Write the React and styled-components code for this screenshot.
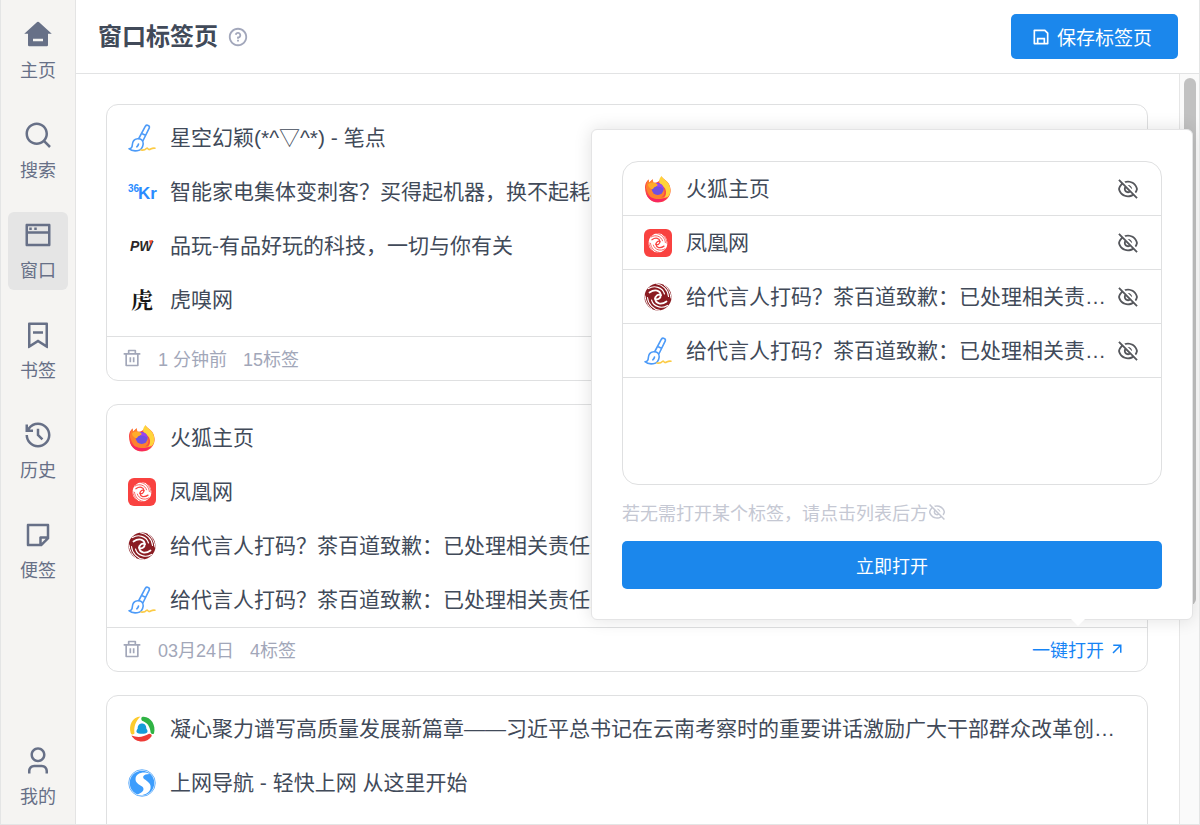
import { useState } from 'react';
import styled, { createGlobalStyle } from 'styled-components';
import {
  RiArrowRightUpLine,
  RiBookmark2Line,
  RiDeleteBinLine,
  RiEyeOffLine,
  RiHistoryLine,
  RiQuestionLine,
  RiSaveLine,
  RiSearchLine,
  RiStickyNoteLine,
  RiUser3Line,
  RiWindowLine,
} from 'react-icons/ri';

const navItems = [
  { id: 'home', label: '主页', Icon: HomeIcon },
  { id: 'search', label: '搜索', Icon: RiSearchLine },
  { id: 'window', label: '窗口', Icon: RiWindowLine },
  { id: 'bookmark', label: '书签', Icon: RiBookmark2Line },
  { id: 'history', label: '历史', Icon: RiHistoryLine },
  { id: 'note', label: '便签', Icon: RiStickyNoteLine },
];

const savedTabs = [
  { id: 1, icon: 'firefox', title: '火狐主页' },
  { id: 2, icon: 'ifeng', title: '凤凰网' },
  { id: 3, icon: 'phoenix', title: '给代言人打码？茶百道致歉：已处理相关责任人' },
  { id: 4, icon: 'brush', title: '给代言人打码？茶百道致歉：已处理相关责任人' },
];

const groups = [
  {
    id: 'recent',
    time: '1 分钟前',
    count: 15,
    tabs: [
      { id: 1, icon: 'brush', title: '星空幻颖(*^▽^*) - 笔点' },
      { id: 2, icon: 'kr', title: '智能家电集体变刺客？买得起机器，换不起耗材' },
      { id: 3, icon: 'pw', title: '品玩-有品好玩的科技，一切与你有关' },
      { id: 4, icon: 'tiger', title: '虎嗅网' },
    ],
  },
  { id: 'march', time: '03月24日', count: 4, tabs: savedTabs },
  {
    id: 'older',
    time: '03月23日',
    count: 2,
    tabs: [
      {
        id: 1,
        icon: 'tencent',
        title: '凝心聚力谱写高质量发展新篇章——习近平总书记在云南考察时的重要讲话激励广大干部群众改革创新热情',
      },
      { id: 2, icon: 'sogou', title: '上网导航 - 轻快上网 从这里开始' },
    ],
  },
];

export default function App() {
  const [active, setActive] = useState('window');
  const [opened, setOpened] = useState('march');

  return (
    <Shell>
      <GlobalStyle />
      <Sidebar>
        <Nav>
          {navItems.map(({ id, label, Icon }) => (
            <NavButton key={id} type="button" $active={active === id} onClick={() => setActive(id)}>
              <Icon size={30} aria-hidden="true" />
              {label}
            </NavButton>
          ))}
        </Nav>
        <NavButton type="button" $active={active === 'me'} onClick={() => setActive('me')}>
          <RiUser3Line size={30} aria-hidden="true" />
          我的
        </NavButton>
      </Sidebar>
      <Main>
        <Header>
          <h1>窗口标签页</h1>
          <HelpButton type="button" aria-label="帮助">
            <RiQuestionLine size={22} />
          </HelpButton>
          <SaveButton type="button">
            <RiSaveLine size={20} aria-hidden="true" />
            保存标签页
          </SaveButton>
        </Header>
        <Body>
          <Cards>
            {groups.map(group => (
              <Card key={group.id} onMouseEnter={() => setOpened(group.id)}>
                <TabList $more={group.count > group.tabs.length}>
                  {group.tabs.map(tab => (
                    <li key={tab.id}>
                      <TabLink href="#">
                        <Favicon name={tab.icon} />
                        <TabTitle>{tab.title}</TabTitle>
                      </TabLink>
                    </li>
                  ))}
                </TabList>
                <CardFooter>
                  <IconButton type="button" aria-label="删除">
                    <RiDeleteBinLine size={20} />
                  </IconButton>
                  <time>{group.time}</time>
                  <span>{group.count}标签</span>
                  {opened === group.id && (
                    <OpenLink href="#">
                      一键打开
                      <RiArrowRightUpLine size={18} aria-hidden="true" />
                    </OpenLink>
                  )}
                </CardFooter>
              </Card>
            ))}
          </Cards>
          <Track>
            <Thumb />
          </Track>
        </Body>
      </Main>
      <OpenPopover tabs={savedTabs} />
    </Shell>
  );
}

function OpenPopover({ tabs }) {
  return (
    <Popover role="dialog" aria-label="一键打开">
      <PickList>
        {tabs.map(tab => (
          <PickRow key={tab.id}>
            <Favicon name={tab.icon} />
            <TabTitle>{tab.title}</TabTitle>
            <EyeButton type="button" aria-label="隐藏">
              <RiEyeOffLine size={22} />
            </EyeButton>
          </PickRow>
        ))}
      </PickList>
      <Hint>
        若无需打开某个标签，请点击列表后方
        <RiEyeOffLine size={18} aria-hidden="true" />
      </Hint>
      <OpenButton type="button">立即打开</OpenButton>
    </Popover>
  );
}

function HomeIcon({ size }) {
  return (
    <svg width={size} height={size} viewBox="0 0 24 24" fill="currentColor" aria-hidden="true">
      <path d="M20 20a1 1 0 0 1-1 1H5a1 1 0 0 1-1-1v-9H1l10.327-9.388a1 1 0 0 1 1.346 0L23 11h-3v9zM8 15v2h8v-2H8z" />
    </svg>
  );
}

// a disc cut by spiral arms, the second half is the first one turned round
function Swirl({ color, gap }) {
  return (
    <g>
      <circle cx="14" cy="14" r="13.5" fill={color} />
      <g fill="none" stroke={gap} strokeLinecap="round">
        {[0, 180].map(angle => (
          <g key={angle} transform={`rotate(${angle} 14 14)`}>
            <path d="M17 12.300C14.500 10.500 11 12.500 11.300 16.300c.3 4.200 5.700 6.200 11.200 2.200" strokeWidth="1.800" />
            <path d="M7.500 17C9.500 24 18 26 23.500 22.500" strokeWidth="1.200" />
            <path d="M3.500 14.500C4 21 9.500 26.500 15.500 27.300" strokeWidth="1.100" />
            <path d="M1 13c.5 5.500 3 10 7 13.200" strokeWidth="1" />
          </g>
        ))}
      </g>
    </g>
  );
}

const favicons = {
  brush: (
    <g fill="none" strokeLinecap="round" strokeLinejoin="round" strokeWidth="1.600">
      <path stroke="#4d9bf8" d="M10.800 14.500 17.400 2.200c1.300-2 4.600-.7 3.900 1.700l-6.200 12.600M14.300 9.800l3.100 1.500" />
      <path
        stroke="#4d9bf8"
        d="M9.300 14.800c3.600-.6 6.300 1.800 5.900 5.200-.4 3.500-2.600 6.300-6 6.700-3 .4-6.300-.2-8.200-2 2.300 0 3.200-1.200 3.300-3.700.2-3.300 2-5.800 5-6.200zM10.500 20c-.2 1.200-.8 2-1.700 2.800"
      />
      <path stroke="#fccb45" d="M13 26c2.500.5 4.200-.2 5.700-1.800.8-.8 1.500 1.700 2.600 1.400 1.600-.5 2.800-1.900 5.700-1.400" />
    </g>
  ),
  kr: (
    <g fill="#2a8cff" fontFamily="'Liberation Sans', sans-serif" fontWeight="700">
      <text x="0" y="14" fontSize="10">
        36
      </text>
      <text x="10" y="21" fontSize="17">
        Kr
      </text>
    </g>
  ),
  pw: (
    <g>
      <text x="2" y="19" fontSize="14" fill="#2b2728" fontFamily="'Liberation Sans', sans-serif" fontStyle="italic" fontWeight="700">
        PW
      </text>
      <path fill="#f05032" d="m21 8.500 4-.5-2.500 6z" />
    </g>
  ),
  tiger: (
    <text x="3" y="22" fontSize="22" fill="#171717" fontFamily="'Noto Serif CJK SC', 'Noto Sans CJK SC', serif" fontWeight="700">
      虎
    </text>
  ),
  firefox: (
    <g>
      <path fill="#fb4a45" d="M1 12.500C1.200 8 3 6 4.600 4.600l.6 3 3.400-3.300.8 3.500c3 .4 6.600-1 8.200-6.300 1.200 2.500 4.400 3.200 6.700 6.500 2 3 3.300 8 1.400 12-2.200 4.800-6.500 7.500-11.700 7.500C7 27.500 1 22 1 12.500z" />
      <path fill="#ff9425" d="M2 13c0-4 1-6.500 2.600-8.400l.6 3 3.400-3.300.8 3.500c5-.2 9 2 10.600 6 1 4 .5 7-3.200 9 5-1 9-4.500 9.400-9 .6 8.200-6 12.500-12 12C8 25.500 4 20 2 13z" opacity=".75" />
      <path fill="#ffd43a" d="M17.600 1c.6 3 5.400 4 7.600 8.800 1.700 4 1.500 7.700.2 10.200-1.400 2.300-3.400 3.600-5.600 4 2.200-3 3-7 1.400-10.200-1.500-3.200-4.800-3.800-6-6.400-.4-2.400.8-5 2.400-6.400z" />
      <circle cx="13.700" cy="14" r="6" fill="#7150e0" />
      <path fill="#9b43f0" d="M11 8.700c4.400-1.700 8.700 1.500 8.700 6-1.600-3-4.300-3.300-6.200-2.700z" />
      <path fill="#ffac29" d="M4 9.500c2-2.500 7-3 9.800.4-1 1.900-3.600 1.500-4.300 3.300-.7 1.600-2.400 1-3 .2C5 12.500 4 11 4 9.500z" />
      <path fill="#f72662" d="M2 18c3.500 5.700 14 8.500 21.500 3.500-4.500 8-17.500 8-21.500-3.500z" />
    </g>
  ),
  ifeng: (
    <g>
      <rect width="28" height="28" rx="6" fill="#f94240" />
      <g transform="translate(4 4) scale(.71)">
        <Swirl color="#fff" gap="#f94240" />
      </g>
    </g>
  ),
  phoenix: <Swirl color="#8a1c22" gap="#fff" />,
  tencent: (
    <g>
      <path fill="#fdcb2d" d="M12.500 1.500C4 2 .5 11 2.700 18c.9 2 2.300 2 3.800.6C5.500 12 7.500 6 12.500 1.500z" />
      <path fill="#2fb344" d="M14 2c8-1.500 14.500 8 12 16.500-1.500 1-2.500.4-3.300-.8C22 11 19 7.500 14 5.800c-1-1.200-1-2.800 0-3.800z" />
      <path fill="#ee3b36" d="M3.500 20.500c6 2.500 12 1.600 17.600-1.700 2 .3 3 1 2.500 2.400-4.500 7.300-16.100 7-20.100-.7z" />
      <path fill="#159bd9" d="M14 8.500c3 0 4.300 2.200 4.300 5 1.200 1.500 1.700 3.300.8 4-.8 1.700-9.400 1.700-10.200 0-.9-.7-.4-2.500.8-4 0-2.800 1.300-5 4.300-5z" />
    </g>
  ),
  sogou: (
    <g>
      <circle cx="14" cy="14" r="13.300" fill="#fff" stroke="#6cb3fb" strokeWidth="1" />
      <circle cx="14" cy="14" r="12.300" fill="#3c9dfd" />
      <path
        fill="#fff"
        d="M21.500 5C16 1.700 8.500 4 7.600 9c-.7 5 3.500 6.300 6.500 8.600 2.600 2 1.500 5.400-2.500 6.900-1 .5-2 .9-3 1 6.500 1.800 12.700-1 13.900-6 1-5-2.800-7-6-9.300-2.600-2-1.500-5 5-5.200z"
      />
    </g>
  ),
};

function Favicon({ name }) {
  return (
    <FaviconSvg viewBox="0 0 28 28" aria-hidden="true">
      {favicons[name]}
    </FaviconSvg>
  );
}

const GlobalStyle = createGlobalStyle`
  * {
    box-sizing: border-box;
  }

  body {
    margin: 0;
    background: #fff;
    color: #414a59;
    font-family: 'Liberation Sans', 'Noto Sans CJK SC', sans-serif;
  }

  button {
    border: none;
    padding: 0;
    background: none;
    color: inherit;
    font: inherit;
    cursor: pointer;
  }

  a {
    color: inherit;
    text-decoration: none;
  }

  ul {
    list-style: none;
    margin: 0;
    padding: 0;
  }

  svg {
    flex-shrink: 0;
  }
`;

const Shell = styled.div`
  position: relative;
  display: flex;
  height: 100vh;
  border: 1px solid #e4e5e5;
  border-top: none;
  overflow: hidden;
`;

const Sidebar = styled.aside`
  flex: 0 0 75px;
  display: flex;
  flex-direction: column;
  align-items: center;
  justify-content: space-between;
  padding: 12px 0 8px;
  background: #f5f4f2;
  border-right: 1px solid #e4e4e4;
`;

const Nav = styled.nav`
  display: grid;
  gap: 22px;
`;

const NavButton = styled.button`
  display: flex;
  flex-direction: column;
  align-items: center;
  gap: 8px;
  width: 60px;
  height: 78px;
  padding-top: 8px;
  border-radius: 6px;
  background: ${props => (props.$active ? '#e5e5e5' : 'transparent')};
  color: #677087;
  font-size: 18px;
  line-height: 26px;
`;

const Main = styled.main`
  flex: 1;
  min-width: 0;
  display: flex;
  flex-direction: column;
`;

const Header = styled.header`
  flex: 0 0 74px;
  display: flex;
  align-items: center;
  padding: 0 21px 0 22px;
  border-bottom: 1px solid #e2e3e4;

  h1 {
    margin: 0;
    font-size: 24px;
    line-height: 36px;
  }
`;

const HelpButton = styled.button`
  display: flex;
  margin-left: 9px;
  color: #a2a7bb;
`;

const SaveButton = styled.button`
  display: flex;
  align-items: center;
  justify-content: center;
  gap: 6px;
  height: 45px;
  margin-left: auto;
  padding: 0 26px 0 20px;
  border-radius: 5px;
  background: #1b87ec;
  color: #fff;
  font-size: 19px;
`;

const Body = styled.div`
  flex: 1;
  min-height: 0;
  display: flex;
`;

const Cards = styled.div`
  flex: 1;
  min-width: 0;
  display: flex;
  flex-direction: column;
  gap: 23px;
  padding: 30px 31px 0 30px;
  overflow-y: auto;
  scrollbar-width: none;
`;

const Card = styled.section`
  flex-shrink: 0;
  border: 1px solid #dfe0e1;
  border-radius: 12px;
`;

const TabList = styled.ul`
  min-height: 222px;
  padding-top: 6px;
  padding-bottom: ${props => (props.$more ? '9px' : '0')};
`;

const TabLink = styled.a`
  display: flex;
  align-items: center;
  gap: 14px;
  height: 54px;
  padding: 0 21px;
`;

const TabTitle = styled.span`
  flex: 1;
  min-width: 0;
  overflow: hidden;
  white-space: nowrap;
  text-overflow: ellipsis;
  font-size: 21px;
  line-height: 32px;
`;

const FaviconSvg = styled.svg`
  width: 28px;
  height: 28px;
  overflow: visible;
`;

const CardFooter = styled.footer`
  display: flex;
  align-items: center;
  gap: 16px;
  height: 44px;
  padding: 0 21px 2px 15px;
  border-top: 1px solid #dfe0e1;
  color: #a2a7b9;
  font-size: 18px;
`;

const IconButton = styled.button`
  display: flex;
`;

const OpenLink = styled.a`
  display: flex;
  align-items: center;
  gap: 4px;
  margin-left: auto;
  color: #1684f5;
`;

const Track = styled.div`
  flex: 0 0 20px;
  padding: 4px 3px 4px 4px;
  border-left: 1px solid #e6e6e6;
  background: #fafafa;
`;

const Thumb = styled.div`
  height: 71%;
  border-radius: 6px;
  background: #c1c1c1;
`;

const Popover = styled.div`
  position: absolute;
  top: 129px;
  right: 6px;
  width: 602px;
  padding: 31px 30px 30px;
  border: 1px solid #e4e4e5;
  border-radius: 6px;
  background: #fff;
  box-shadow: 0 0 18px rgba(0, 0, 0, 0.12);

  &::after {
    content: '';
    position: absolute;
    right: 106px;
    bottom: -7px;
    border: 8px solid transparent;
    border-top-color: #fff;
    border-bottom: none;
  }
`;

const PickList = styled.ul`
  height: 324px;
  border: 1px solid #dfe0e1;
  border-radius: 16px;
  overflow: hidden;
`;

const PickRow = styled.li`
  display: flex;
  align-items: center;
  gap: 14px;
  height: 54px;
  padding: 0 22px 0 21px;
  border-bottom: 1px solid #dfe0e1;
`;

const EyeButton = styled.button`
  display: flex;
  margin-left: -4px;
  color: #55575c;
`;

const Hint = styled.p`
  display: flex;
  align-items: center;
  margin: 0;
  height: 56px;
  padding-bottom: 2px;
  color: #c5c8d3;
  font-size: 18px;
`;

const OpenButton = styled.button`
  width: 100%;
  height: 48px;
  border-radius: 5px;
  background: #1b87ec;
  color: #fff;
  font-size: 18px;
`;
